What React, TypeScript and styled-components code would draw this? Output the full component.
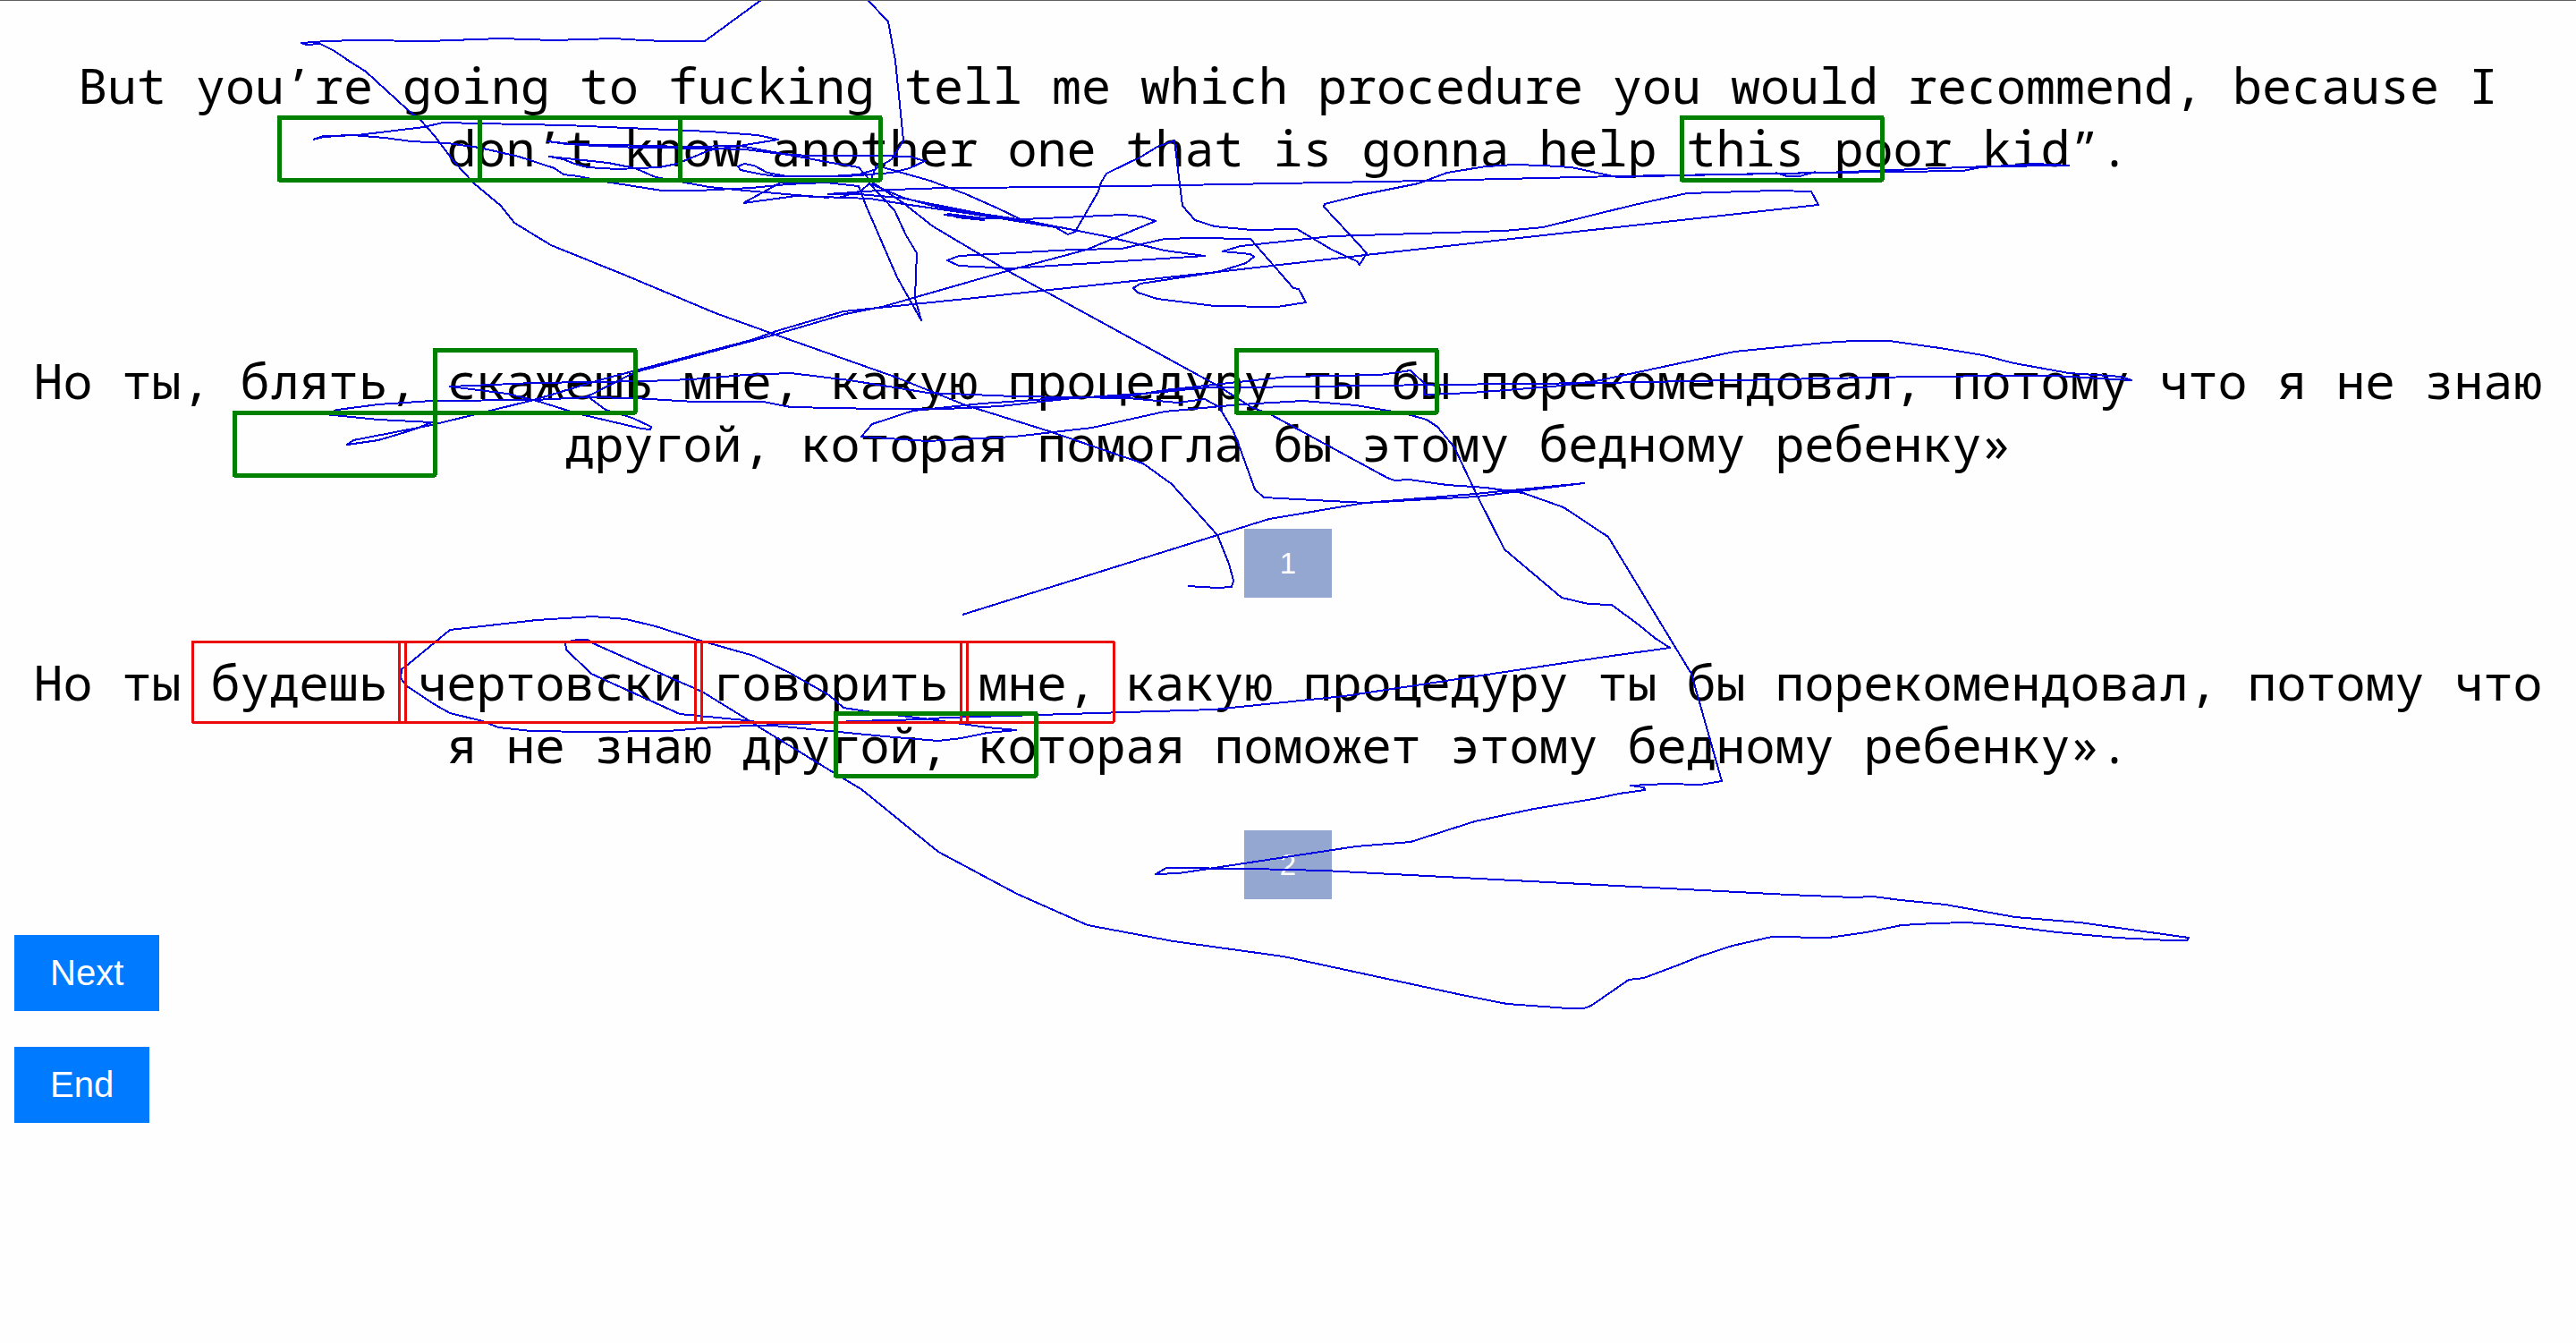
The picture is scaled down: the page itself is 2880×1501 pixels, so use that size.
import React from "react";
import styled, { createGlobalStyle } from "styled-components";

const GlobalStyle = createGlobalStyle`
  body {
    margin: 0;
    background: #fefefe;
  }
`;

const Page = styled.main`
  position: relative;
  box-sizing: border-box;
  min-height: 100vh;
  padding: 59px 16px 0;
  border-top: 1px solid #606060;
  overflow: hidden;
`;

const Sentence = styled.p`
  margin: 0;
  color: #000;
  font-family: "Noto Sans Mono", "DejaVu Sans Mono", monospace;
  font-size: 55px;
  line-height: 70px;
  text-align: center;
`;

const Source = styled(Sentence)`
  margin-bottom: 190px;
`;

const Option = styled.section`
  display: flex;
  flex-direction: column;
  align-items: center;
  gap: 61px;
  margin-bottom: ${(p: { $gap: number }) => p.$gap}px;
`;

const Button = styled.button`
  border: 0;
  border-radius: 0;
  padding: 20px 40px;
  background: #007bff;
  color: #fff;
  font-family: "Liberation Sans", Arial, sans-serif;
  font-size: 40px;
  line-height: 45px;
`;

const ChoiceButton = styled(Button)`
  background: #93a7d0;
  font-size: 33px;
  line-height: 37px;
`;

const Actions = styled.nav`
  display: flex;
  flex-direction: column;
  align-items: flex-start;
  gap: 40px;
`;

const Overlay = styled.svg`
  position: absolute;
  top: -1px;
  left: 0;
  width: 100%;
  pointer-events: none;
`;

const gazePaths: string[] = [
  // Sweep from the top edge to the first choice
  "851,0 788,46 760,46 741,46 700,44 687,43 618,45 560,43 505,45 480,46 400,45 365,46 337,48 342,50 358,49 374,57 390,68 409,80 455,122 470,134 486,152 507,180 530,205 560,230 575,249 616,274 700,308 800,350 864,373 1000,421 1080,453 1173,482 1278,518 1310,541 1328,561 1361,598 1374,630 1379,649 1377,656 1361,657 1328,655",
  // Reading of the first sentence, then down and round the lower choices
  "970,0 993,24 1001,68 1005,107 1010,157 997,178 977,190 960,195 930,197 880,197 858,193 843,185 832,183 825,186 828,190 847,194 867,197 947,197 997,193 1017,188 1034,180 1017,175 980,174 903,174 873,172 833,167 797,166 713,165 647,162 613,158 633,161 683,162 767,164 827,163 930,182 960,187 973,202 1010,227 1043,253 1080,275 1129,304 1363,432 1399,455 1422,464 1551,534 1559,537 1575,536 1618,542 1661,545 1703,551 1748,567 1798,600 1891,753 1925,873 1901,877 1863,876 1823,878 1838,880 1839,883 1810,887 1787,892 1715,904 1649,918 1577,941 1516,946 1318,976 1292,977 1304,970 1399,971 1480,973 2000,1000 2072,1003 2094,1002 2125,1006 2175,1011 2253,1025 2325,1031 2447,1048 2445,1051 2425,1051 2366,1048 2300,1042 2237,1034 2200,1031 2162,1032 2126,1034 2087,1042 2044,1048 1981,1047 1937,1057 1900,1069 1878,1078 1838,1093 1821,1095 1779,1124 1771,1127 1753,1127 1685,1122 1639,1113 1486,1080 1435,1069 1312,1052 1216,1034 1137,999 1049,952 963,882 941,869 846,811 837,805 785,773 753,759 663,719 657,715 645,715 632,718 633,726 661,753 760,798 833,805 860,809 898,809 956,806 1032,804 1056,802 1161,799 1357,793 1503,778 1802,733 1867,724 1850,713 1833,699 1802,676 1776,675 1746,668 1682,614 1651,553 1626,500 1607,477 1595,469 1570,462 1516,453 1457,448 1387,452 1302,460 1221,478 1134,488 1037,493 963,488 975,474 1021,459 1098,451 1185,445 1261,443 1302,436 1384,427 1440,421 1543,419 1577,414 1594,430 1593,441 1645,439 1736,432 1784,426 1939,393 2040,383 2072,381 2112,381 2169,389 2217,397 2252,406 2313,417 2372,421 2383,425 2297,420 2244,420 2147,421 2040,423 1789,428 1607,430 1387,433 1350,433 1291,439 1200,445 1118,454 1057,457 981,457 884,455 853,449 776,449 710,445 657,444 597,447 483,448 423,452 377,458 363,463 423,469 483,472 460,481 423,492 388,497 395,492 483,475 597,447 673,424 840,380 868,370 943,348 1080,334 1361,304 1527,285 2033,229 2025,214 1985,213 1886,216 1827,229 1725,254 1682,258 1489,264 1387,275 1367,281 1398,284 1402,287 1393,294 1361,304 1275,317 1267,322 1272,327 1294,334 1358,342 1428,343 1460,338 1452,323 1446,322 1398,267 1337,266 1302,267 1254,278 1200,279 1072,286 1059,291 1072,297 1129,300 1347,286 1302,280 1236,264 1144,246 1098,239 1006,221 960,217 925,217",
  "831,227 873,204 923,204 960,208 967,227 1003,310 1030,358 1023,333 1025,283 1013,263 1000,235 972,205 963,213 938,221",
  "831,227 890,219 973,222 1010,228 1080,238 1180,254 1194,262 1202,259 1228,214 1231,204 1237,194 1276,175 1294,164 1313,157 1322,230 1336,246 1358,253 1399,257 1450,256 1489,279 1517,292 1520,296 1528,283 1508,261 1480,231 1481,228 1521,218 1586,205 1618,193 1661,186 1693,184 1725,185 1757,187 1808,198 1880,196 2040,193 2195,191 2214,187 2276,183 2313,185 2222,186 2142,189 2040,193 1808,197 1596,202 1318,207 1200,209 1057,210 997,212 925,217",
  "1985,193 1998,197 2012,197 2030,192",
  "350,156 362,152 400,151 474,142 495,137 536,138 633,140 793,147 847,151 870,156 827,163 793,168 757,183 737,187 690,189 657,187 642,183 630,178 614,175 680,182 710,188 733,198 793,209 833,213 890,218 927,221",
  "350,156 362,153 394,151 430,154 460,158 500,160 536,165 580,175 620,188 630,195 647,197 670,202 740,213 780,213 840,210 880,206 923,204",
  "972,205 980,185 1040,202 1080,217 1116,233 1141,245 1180,254",
  "972,205 1010,221 1043,230 1098,241 1144,246",
  // Crossing to the second sentence and out below the first choice
  "1055,240 1100,246 1070,243 1060,239 1100,244 1144,245 1256,240 1276,242 1292,247 1215,279 1129,302 986,343 945,351 863,375 710,416 657,443 677,458 707,467 728,477 727,480 717,479 645,462 600,448 567,440 503,432 597,428 723,426 773,424 833,419 884,417 950,425 1037,439 1134,443 1261,445 1317,450 1347,446 1363,455 1379,482 1386,500 1403,547 1413,556 1526,562 1651,555 1771,540 1649,552 1526,562 1419,580 1076,687",
  // Loop round the marked words
  "837,811 797,813 747,817 660,818 593,817 557,813 540,806 503,797 487,788 455,767 448,758 449,748 457,742 503,704 600,693 663,689 700,692 733,700 783,716 843,733 883,752 927,777 943,791 968,795 1032,803 1104,813 1136,816 1104,819 1075,825 1049,828 989,823 865,811 837,811",
];

type Box = [x: number, y: number, width: number, height: number];

const wordBoxes: Box[] = [
  [215, 717, 238, 90],
  [446, 717, 338, 90],
  [777, 717, 304, 90],
  [1074, 717, 171, 90],
];

const fixationBoxes: Box[] = [
  [312, 131, 224, 70],
  [536, 131, 224, 70],
  [760, 131, 224, 70],
  [1880, 131, 224, 70],
  [486, 391, 224, 70],
  [1382, 391, 224, 70],
  [262, 461, 224, 70],
  [934, 797, 224, 70],
];

function Boxes({ boxes, color, weight }: { boxes: Box[]; color: string; weight: number }) {
  return (
    <g
      fill="none"
      stroke={color}
      strokeWidth={weight}
      strokeLinejoin="round"
      shapeRendering="crispEdges"
    >
      {boxes.map(([x, y, width, height]) => (
        <rect key={`${x}-${y}`} x={x} y={y} width={width} height={height} />
      ))}
    </g>
  );
}

export default function App() {
  return (
    <>
      <GlobalStyle />
      <Page>
        <Source lang="en">
          But you’re going to fucking tell me which procedure you would recommend, because I don’t know
          another one that is gonna help this poor kid”.
        </Source>
        <Option $gap={59} lang="ru">
          <Sentence>
            Но ты, блять, скажешь мне, какую процедуру ты бы порекомендовал, потому что я не знаю другой,
            которая помогла бы этому бедному ребенку»
          </Sentence>
          <ChoiceButton type="button">1</ChoiceButton>
        </Option>
        <Option $gap={40} lang="ru">
          <Sentence>
            Но ты будешь чертовски говорить мне, какую процедуру ты бы порекомендовал, потому что я не
            знаю другой, которая поможет этому бедному ребенку».
          </Sentence>
          <ChoiceButton type="button">2</ChoiceButton>
        </Option>
        <Actions>
          <Button type="button">Next</Button>
          <Button type="button">End</Button>
        </Actions>
        <Overlay viewBox="0 0 2880 1501" aria-hidden="true">
          <g
            fill="none"
            stroke="#0000e0"
            strokeWidth={2}
            strokeLinejoin="round"
            shapeRendering="crispEdges"
          >
            {gazePaths.map((points) => (
              <polyline key={points} points={points} />
            ))}
          </g>
          <Boxes boxes={wordBoxes} color="#ea0a0a" weight={3} />
          <Boxes boxes={fixationBoxes} color="#008000" weight={5} />
        </Overlay>
      </Page>
    </>
  );
}
